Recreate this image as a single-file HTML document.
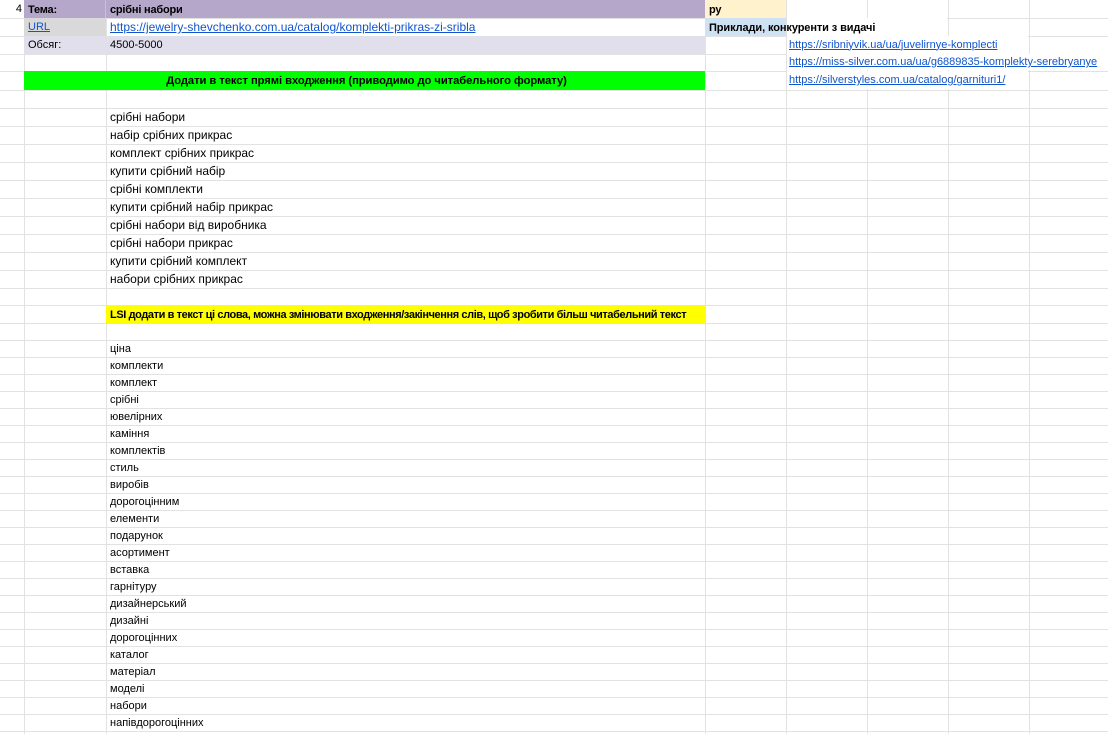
<!DOCTYPE html>
<html><head><meta charset="utf-8"><style>
body{margin:0;width:1108px;height:734px;overflow:hidden;position:relative;background:#fff;font-family:"Liberation Sans",Arial,sans-serif;font-size:12px;color:#000}
.v{position:absolute;top:0;height:734px;width:1px;background:#e2e2e2}
.r{position:absolute;left:0;width:1108px;border-bottom:1px solid #e2e2e2;box-sizing:border-box}
.c{position:absolute;top:0;bottom:0;box-sizing:border-box;padding-left:4px;white-space:nowrap;display:flex;align-items:center;overflow:visible}
.b{font-weight:bold;font-size:11px;letter-spacing:-0.2px;padding-top:1px}
a{color:#1155cc;text-decoration:underline}
.s{font-size:11px}
.w{background:#fff}
</style></head><body>
<div class="v" style="left:24px"></div><div class="v" style="left:106px"></div><div class="v" style="left:705px"></div><div class="v" style="left:786px"></div><div class="v" style="left:867px"></div><div class="v" style="left:948px"></div><div class="v" style="left:1029px"></div>

<div class="r" style="top:0;height:19px">
<div class="c" style="left:0;width:24px;justify-content:flex-end;padding-right:2px;font-size:11px">4</div>
<div class="c b" style="left:24px;width:82px;background:#b4a7c9;border-right:1px solid #c9bedb">Тема:</div>
<div class="c b" style="left:106px;width:599px;background:#b4a7c9">срібні набори</div>
<div class="c b" style="left:705px;width:81px;background:#fff2cc">ру</div>
</div>
<div class="r" style="top:18px;height:19px">
<div class="c s" style="left:24px;width:82px;background:#d9d9d9"><a>URL</a></div>
<div class="c" style="left:106px;width:599px"><a>https://jewelry-shevchenko.com.ua/catalog/komplekti-prikras-zi-sribla</a></div>
<div class="c w" style="left:787px;width:160px;bottom:1px"></div>
<div class="c b" style="left:705px;width:81px;background:#cfe2f3;letter-spacing:-0.1px">Приклади, конкуренти з видачі</div>
</div>
<div class="r" style="top:36px;height:19px">
<div class="c s" style="left:24px;width:82px;background:#e1dfec">Обсяг:</div>
<div class="c s" style="left:106px;width:599px;background:#e1dfec">4500-5000</div>
<div class="c s w" style="left:787px;width:241px;bottom:1px;padding-left:2px"><a>https://sribniyvik.ua/ua/juvelirnye-komplecti</a></div>
</div>
<div class="r" style="top:54px;height:18px">
<div class="c s w" style="left:787px;width:321px;bottom:1px;padding-left:2px"><a>https://miss-silver.com.ua/ua/g6889835-komplekty-serebryanye</a></div>
</div>
<div class="r" style="top:71px;height:20px">
<div class="c b" style="left:24px;width:681px;background:#00ff00;justify-content:center;letter-spacing:-0.05px;font-size:11.2px">Додати в текст прямі входження (приводимо до читабельного формату)</div>
<div class="c s w" style="left:787px;width:241px;bottom:1px;padding-left:2px"><a>https://silverstyles.com.ua/catalog/garnituri1/</a></div>
</div>
<div class="r" style="top:90px;height:19px"></div>
<div class="r" style="top:108px;height:19px"><div class="c" style="left:106px">срібні набори</div></div>
<div class="r" style="top:126px;height:19px"><div class="c" style="left:106px">набір срібних прикрас</div></div>
<div class="r" style="top:144px;height:19px"><div class="c" style="left:106px">комплект срібних прикрас</div></div>
<div class="r" style="top:162px;height:19px"><div class="c" style="left:106px">купити срібний набір</div></div>
<div class="r" style="top:180px;height:19px"><div class="c" style="left:106px">срібні комплекти</div></div>
<div class="r" style="top:198px;height:19px"><div class="c" style="left:106px">купити срібний набір прикрас</div></div>
<div class="r" style="top:216px;height:19px"><div class="c" style="left:106px">срібні набори від виробника</div></div>
<div class="r" style="top:234px;height:19px"><div class="c" style="left:106px">срібні набори прикрас</div></div>
<div class="r" style="top:252px;height:19px"><div class="c" style="left:106px">купити срібний комплект</div></div>
<div class="r" style="top:270px;height:19px"><div class="c" style="left:106px">набори срібних прикрас</div></div>
<div class="r" style="top:288px;height:18px"></div>
<div class="r" style="top:305px;height:19px"><div class="c b" style="left:106px;width:599px;background:#ffff00;letter-spacing:-0.4px">LSI додати в текст ці слова, можна змінювати входження/закінчення слів, щоб зробити більш читабельний текст</div></div>
<div class="r" style="top:323px;height:18px"></div>
<div class="r" style="top:340px;height:18px"><div class="c s" style="left:106px">ціна</div></div>
<div class="r" style="top:357px;height:18px"><div class="c s" style="left:106px">комплекти</div></div>
<div class="r" style="top:374px;height:18px"><div class="c s" style="left:106px">комплект</div></div>
<div class="r" style="top:391px;height:18px"><div class="c s" style="left:106px">срібні</div></div>
<div class="r" style="top:408px;height:18px"><div class="c s" style="left:106px">ювелірних</div></div>
<div class="r" style="top:425px;height:18px"><div class="c s" style="left:106px">каміння</div></div>
<div class="r" style="top:442px;height:18px"><div class="c s" style="left:106px">комплектів</div></div>
<div class="r" style="top:459px;height:18px"><div class="c s" style="left:106px">стиль</div></div>
<div class="r" style="top:476px;height:18px"><div class="c s" style="left:106px">виробів</div></div>
<div class="r" style="top:493px;height:18px"><div class="c s" style="left:106px">дорогоцінним</div></div>
<div class="r" style="top:510px;height:18px"><div class="c s" style="left:106px">елементи</div></div>
<div class="r" style="top:527px;height:18px"><div class="c s" style="left:106px">подарунок</div></div>
<div class="r" style="top:544px;height:18px"><div class="c s" style="left:106px">асортимент</div></div>
<div class="r" style="top:561px;height:18px"><div class="c s" style="left:106px">вставка</div></div>
<div class="r" style="top:578px;height:18px"><div class="c s" style="left:106px">гарнітуру</div></div>
<div class="r" style="top:595px;height:18px"><div class="c s" style="left:106px">дизайнерський</div></div>
<div class="r" style="top:612px;height:18px"><div class="c s" style="left:106px">дизайні</div></div>
<div class="r" style="top:629px;height:18px"><div class="c s" style="left:106px">дорогоцінних</div></div>
<div class="r" style="top:646px;height:18px"><div class="c s" style="left:106px">каталог</div></div>
<div class="r" style="top:663px;height:18px"><div class="c s" style="left:106px">матеріал</div></div>
<div class="r" style="top:680px;height:18px"><div class="c s" style="left:106px">моделі</div></div>
<div class="r" style="top:697px;height:18px"><div class="c s" style="left:106px">набори</div></div>
<div class="r" style="top:714px;height:18px"><div class="c s" style="left:106px">напівдорогоцінних</div></div>
</body></html>
